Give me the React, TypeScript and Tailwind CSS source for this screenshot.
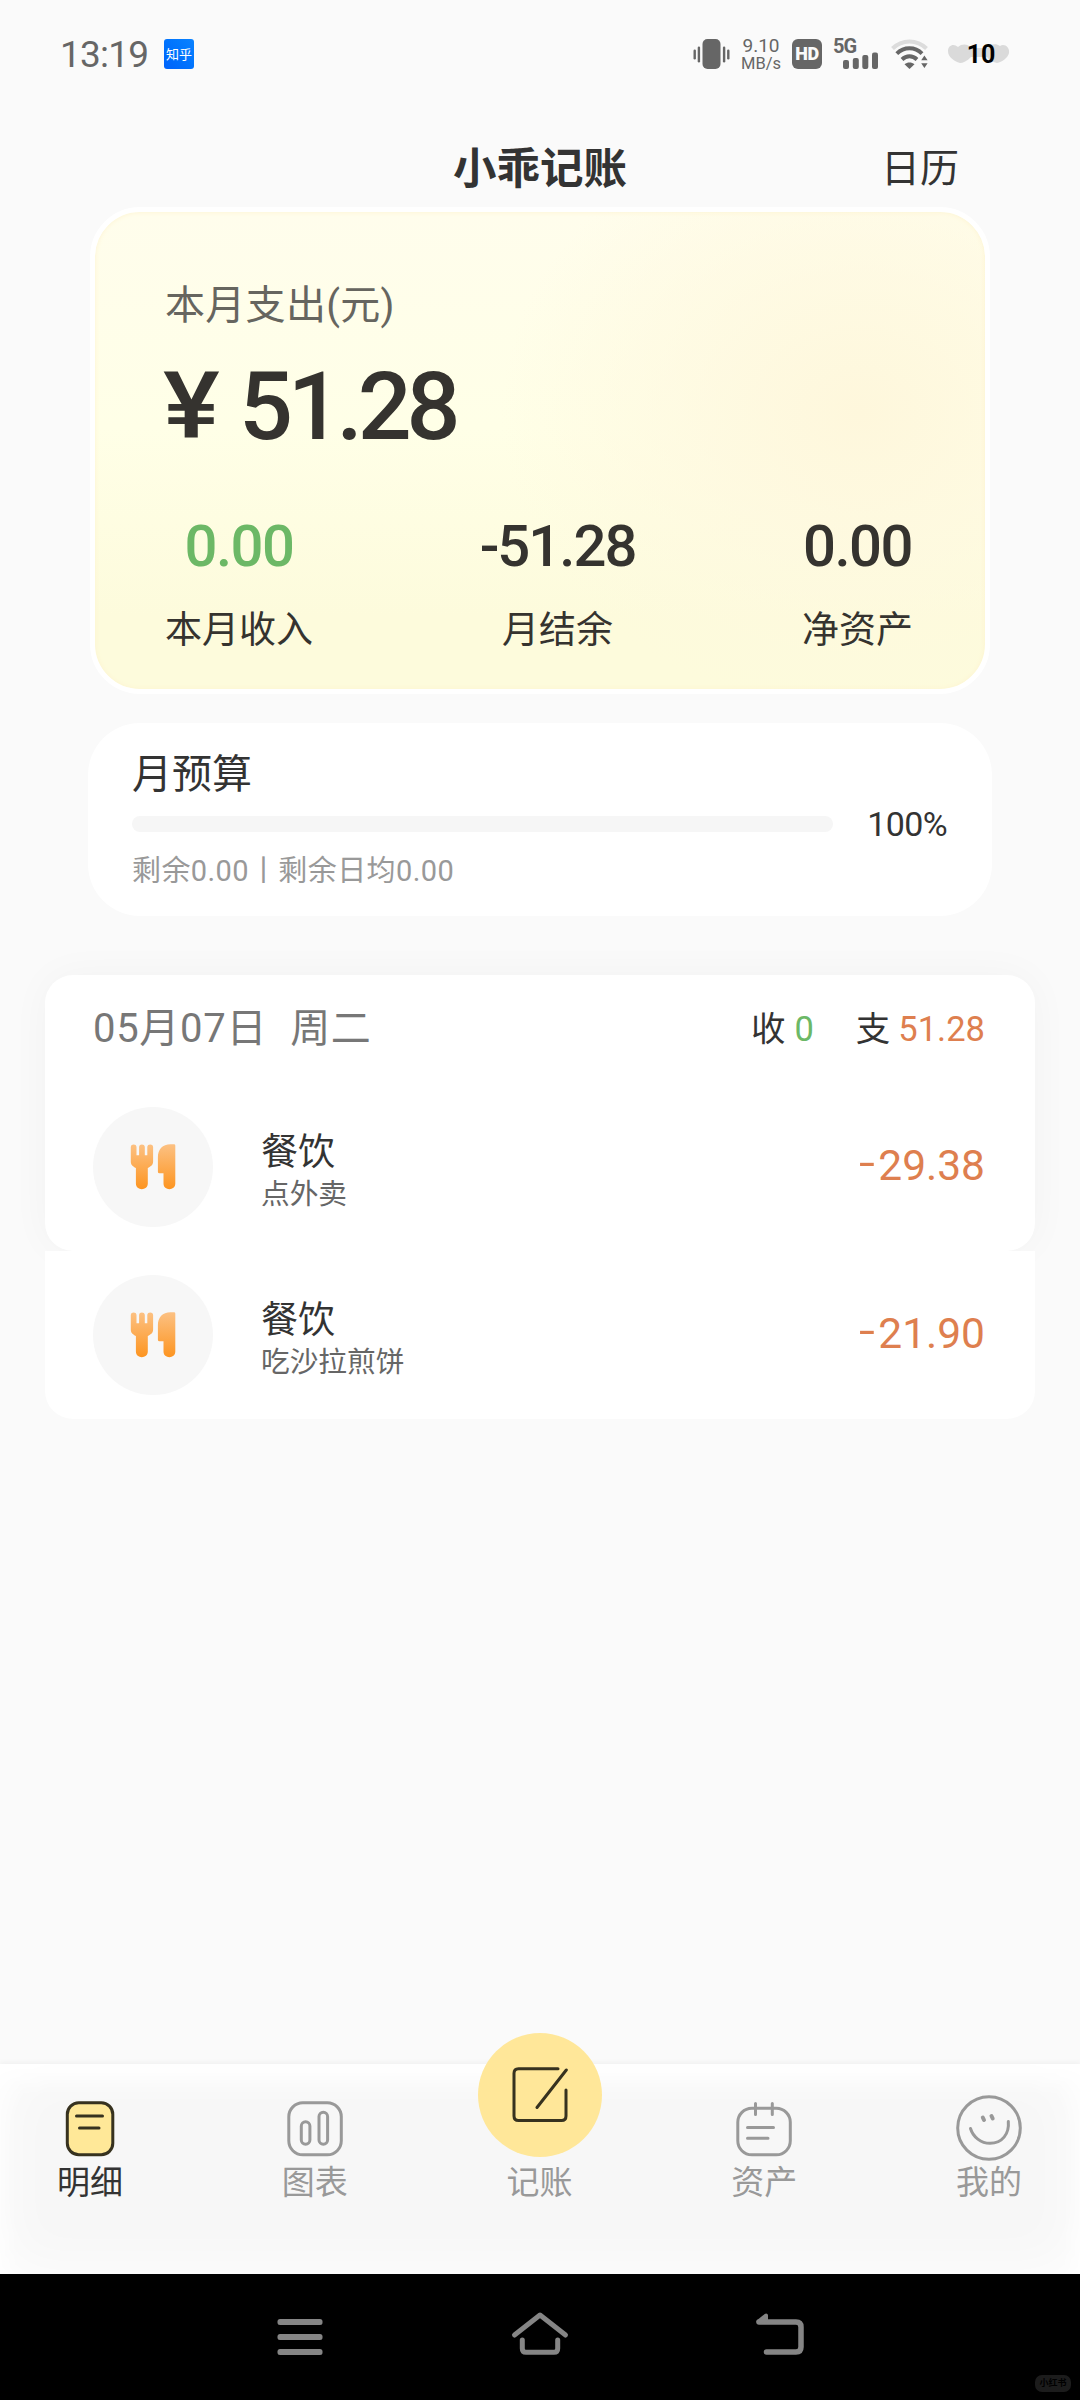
import type { ReactNode } from 'react'

type Entry = {
  id: number
  category: string
  note: string
  amount: string
}

type Stat = {
  label: string
  value: string
  valueClass: string
}

const entries: Entry[] = [
  { id: 1, category: '餐饮', note: '点外卖', amount: '29.38' },
  { id: 2, category: '餐饮', note: '吃沙拉煎饼', amount: '21.90' },
]

const stats: Stat[] = [
  { label: '本月收入', value: '0.00', valueClass: 'tracking-[-1.5px] text-[#6cb866]' },
  { label: '月结余', value: '-51.28', valueClass: 'tracking-[-2px] text-[#35332f]' },
  { label: '净资产', value: '0.00', valueClass: 'tracking-[-1.5px] text-[#35332f]' },
]

function StatusBar() {
  return (
    <div className="flex h-[108px] items-center pl-[60px] pr-[69px] text-[#666]">
      <span className="w-[90px] text-[37px] leading-none tracking-[-0.8px]">13:19</span>
      <span className="ml-[14px] flex size-[30px] items-center justify-center rounded-[3px] bg-gradient-to-bl from-[#0b83ff] to-[#0062fb] text-[13px] leading-none text-white">
        知乎
      </span>

      <svg className="ml-auto" width="37" height="30" viewBox="0 0 37 30" fill="#666">
        <rect x="9.5" y="0" width="18" height="30" rx="5" />
        <rect x="0.5" y="10.5" width="2.4" height="10" rx="1.2" />
        <rect x="4.7" y="7.5" width="2.4" height="16" rx="1.2" />
        <rect x="29.9" y="7.5" width="2.4" height="16" rx="1.2" />
        <rect x="34.1" y="10.5" width="2.4" height="10" rx="1.2" />
      </svg>
      <div className="ml-[12px] flex h-[34px] w-[38px] flex-col items-center justify-between whitespace-nowrap">
        <span className="text-[19px] leading-[17px]">9.10</span>
        <span className="text-[16.5px] leading-[15px]">MB/s</span>
      </div>
      <span className="ml-[12px] flex size-[30px] items-center justify-center rounded-[6px] bg-[#666] text-[18px] font-black leading-none tracking-[-0.5px] text-[#fafafa]">
        HD
      </span>
      <div className="relative ml-[11px] h-[30px] w-[46px]">
        <span className="absolute left-0 top-0 text-[20px] font-bold leading-[15px] tracking-[-1px]">5G</span>
        <svg className="absolute inset-0" width="46" height="30" viewBox="0 0 46 30" fill="#666">
          <rect x="10" y="21" width="6" height="9" rx="2" />
          <rect x="19.8" y="19" width="6" height="11" rx="2" />
          <rect x="29.3" y="16" width="6" height="14" rx="2" />
          <rect x="39" y="13.5" width="6" height="16.5" rx="2" />
        </svg>
      </div>
      <svg className="ml-[12px]" width="38" height="30" viewBox="0 0 38 30" fill="none" strokeWidth="4">
        <path d="M1.5 9.5C11 0 26 0 35.5 9.5" stroke="#dcdcdc" />
        <path d="M5.8 14.6C13 7.5 24 7.5 31 14.6" stroke="#666" />
        <path d="M11 20.5C15.5 16.3 21.5 16.3 26 20.5" stroke="#666" />
        <path d="M13.5 25.2C16.5 23 20.5 23 23.5 25.2L18.5 30Z" fill="#666" stroke="none" />
        <path d="M30.2 21.3L33.4 16.5L36.6 21.3ZM30.2 24.2L33.4 29L36.6 24.2Z" fill="#666" stroke="none" />
      </svg>
      <div className="relative ml-[18px] flex h-[22px] w-[64px] items-center justify-center">
        <svg className="absolute inset-0" width="64" height="22" viewBox="0 0 64 22" fill="#dadada">
          <path d="M11 4C15 0 22 1 24 5L40 5C43 1 49 0 53 3C57 0 63 4 62 10C61 15 55 19 50 20C45 19 42 17 40 14L24 14C20 18 16 20 13 20C7 18 1 14 1 8C1 2 7 0 11 4Z" />
        </svg>
        <span className="relative left-[2px] text-[25px] font-bold leading-none text-black">10</span>
      </div>
    </div>
  )
}

function Header() {
  return (
    <div className="grid h-[99px] grid-cols-3 items-center pr-[121px] pl-[121px] pt-[24px]">
      <h1 className="col-start-2 justify-self-center whitespace-nowrap text-[43.5px] font-bold leading-none text-[#333]">
        小乖记账
      </h1>
      <span className="justify-self-end text-[39px] leading-none text-[#333]">日历</span>
    </div>
  )
}

function SummaryCard() {
  return (
    <section className="mx-[90px] h-[487px] rounded-[50px] border-[5px] border-white bg-[radial-gradient(ellipse_360px_300px_at_86%_42%,#fef7dc_0%,#fef8dfb0_45%,#fffbe400_100%),linear-gradient(180deg,#fffdec_0%,#ffffe7_45%,#fdfbdc_85%)] pl-[70px] pr-[72px] shadow-[inset_0_0_5px_#fdf3cf]">
      <div className="pt-[72px] text-[40px] leading-[44px] tracking-[0.3px] text-[#66655f]">本月支出(元)</div>
      <div className="mt-[30px] flex h-[96px] items-center whitespace-nowrap font-medium leading-none text-[#35332f]">
        <span className="-ml-[2px] w-[76px]">
          <span className="inline-block origin-left scale-x-[1.15] text-[93px]">¥</span>
        </span>
        <span className="text-[95px] tracking-[-5.2px]">51.28</span>
      </div>
      <div className="mt-[52px] flex justify-between">
        {stats.map((stat) => (
          <div key={stat.label} className="flex flex-col items-center">
            <span className={`text-[58px] font-medium leading-[80px] ${stat.valueClass}`}>{stat.value}</span>
            <span className="mt-[17px] text-[37px] leading-[56px] text-[#35332f]">{stat.label}</span>
          </div>
        ))}
      </div>
    </section>
  )
}

function BudgetCard() {
  return (
    <section className="mx-[88px] mt-[29px] h-[193px] rounded-[52px] bg-white pl-[44px] pr-[45px] pt-[30px]">
      <div className="text-[40px] leading-[44px] text-[#333]">月预算</div>
      <div className="mt-[9px] flex h-[36px] items-center justify-between">
        <div className="h-[16px] w-[701px] rounded-full bg-[#f6f6f6]" />
        <span className="text-[34px] leading-none tracking-[-0.6px] text-[#333]">100%</span>
      </div>
      <div className="mt-[13px] whitespace-nowrap text-[29px] leading-[32px] tracking-[0.4px] text-[#999]">
        剩余0.00丨剩余日均0.00
      </div>
    </section>
  )
}

function MealIcon() {
  return (
    <svg width="46" height="46" viewBox="0 0 46 46" fill="url(#meal)">
      <defs>
        <linearGradient id="meal" x1="0" y1="0" x2="0" y2="46" gradientUnits="userSpaceOnUse">
          <stop offset="0" stopColor="#fcc183" />
          <stop offset="1" stopColor="#fd941f" />
        </linearGradient>
      </defs>
      <path d="M0.8 3C0.8 -0.3 6.5 -0.3 6.5 3V11.3H9.1V3C9.1 -0.3 14.8 -0.3 14.8 3V11.3H17.3V3C17.3 -0.3 23.1 -0.3 23.1 3V17.5C23.1 21 21 22.3 17.8 24V39.5C17.8 47 5.9 47 5.9 39.5V24C2.8 22.3 0.8 21 0.8 17.5Z" />
      <path d="M44 0.3Q45.3 0.3 45.3 1.6V39.5C45.3 47 33.5 47 33.5 39.5V29.3H29.5Q27.9 29.3 27.9 27.7V13.5C27.9 5.5 32.5 0.3 40.5 0.3Z" />
    </svg>
  )
}

function Expense({ amount }: { amount: string }) {
  return (
    <span className="relative -top-px ml-auto flex items-center text-[42.5px] leading-none text-[#de7f4f]">
      <span className="relative -top-[3px] mr-[4px] inline-block origin-right scale-x-[1.35]">-</span>
      {amount}
    </span>
  )
}

function EntryRow({ entry }: { entry: Entry }) {
  return (
    <div className="flex h-[168px] items-center">
      <div className="flex size-[120px] items-center justify-center rounded-full bg-[#f7f7f7]">
        <MealIcon />
      </div>
      <div className="ml-[48px] flex flex-col pt-[10px]">
        <span className="text-[37px] leading-[44px] text-[#333]">{entry.category}</span>
        <span className="text-[28.7px] leading-[39px] text-[#666]">{entry.note}</span>
      </div>
      <Expense amount={entry.amount} />
    </div>
  )
}

function DayGroup() {
  return (
    <section className="mx-[45px] mt-[59px]">
      <div className="rounded-[28px] bg-white pl-[48px] pr-[50px] shadow-[0_0_40px_rgba(0,0,0,0.035)]">
        <div className="flex h-[108px] items-center justify-between whitespace-nowrap leading-none">
          <span className="text-[40px] tracking-[0.7px] text-[#777]">
            05月07日<span className="ml-[23px]">周二</span>
          </span>
          <div className="flex items-center text-[34.5px] text-[#333]">
            <span>收</span>
            <span className="ml-[9px] text-[#6cb866]">0</span>
            <span className="ml-[42px]">支</span>
            <span className="ml-[8px] text-[#de7f4f]">51.28</span>
          </div>
        </div>
        <EntryRow entry={entries[0]} />
      </div>
      <div className="relative rounded-b-[28px] bg-white pl-[48px] pr-[50px]">
        <EntryRow entry={entries[1]} />
      </div>
    </section>
  )
}

function Tab({ label, active, children }: { label: string; active?: boolean; children: ReactNode }) {
  return (
    <div className="flex w-[66px] flex-col items-center">
      <div className="flex h-[70px] items-end justify-center">{children}</div>
      <span
        className={`mt-[2px] whitespace-nowrap text-[33px] leading-[40px] ${active ? 'text-[#333]' : 'text-[#999]'}`}
      >
        {label}
      </span>
    </div>
  )
}

function TabBar() {
  return (
    <nav className="flex h-[210px] justify-between bg-[#f7f7f7] pl-[57px] pr-[58px] pt-[27px] shadow-[inset_0_0_60px_#fff,inset_0_14px_24px_#fff,0_-2px_5px_rgba(0,0,0,0.04)]">
      <Tab label="明细" active>
        <svg className="mb-[4px]" width="50" height="56" viewBox="0 0 50 56" fill="none" stroke="#37321f" strokeWidth="3" strokeLinecap="round">
          <rect x="2.3" y="1.8" width="45.5" height="52" rx="11.5" fill="#ffe898" />
          <path d="M11.5 15H37.5M14.5 27H34" />
        </svg>
      </Tab>
      <Tab label="图表">
        <svg className="mb-[4px]" width="56" height="56" viewBox="0 0 56 56" fill="none" stroke="#999" strokeWidth="3">
          <rect x="1.8" y="1.8" width="52.5" height="52" rx="14" />
          <rect x="14.3" y="20.8" width="8.6" height="22.5" rx="4.3" />
          <rect x="32" y="11.3" width="8.6" height="32" rx="4.3" />
        </svg>
      </Tab>
      <Tab label="记账">
        <div className="mb-[4px] flex size-[124px] shrink-0 items-center justify-center rounded-full bg-[#ffe799]">
          <svg width="56" height="56" viewBox="0 0 56 56" fill="none" stroke="#37321f" strokeWidth="3" strokeLinecap="round">
            <path d="M46 1.8H6.5Q2 1.8 2 6.3V49Q2 53.5 6.5 53.5H49.5Q54 53.5 54 49V23" />
            <path d="M54.3 3L25 40.5" />
          </svg>
        </div>
      </Tab>
      <Tab label="资产">
        <svg className="mb-[4px]" width="56" height="56" viewBox="0 0 56 56" fill="none" stroke="#999" strokeWidth="3" strokeLinecap="round">
          <rect x="1.8" y="7.3" width="52.5" height="46.5" rx="14" />
          <path d="M19.5 2.5V13.5M36.3 2.5V13.5" />
          <path d="M11.5 26.5H37.5M11.5 37.3H32" />
        </svg>
      </Tab>
      <Tab label="我的">
        <svg width="66" height="66" viewBox="0 0 66 66" fill="none" stroke="#999" strokeWidth="3" strokeLinecap="round">
          <circle cx="33" cy="33" r="31.3" />
          <path d="M14.5 33.5C17 42 25 48.3 34 48.3C46 48.3 53.5 39 52.3 26.5" />
          <path d="M26.8 22.5L28 25M35.5 21L36.7 23.5" strokeWidth="4" />
        </svg>
      </Tab>
    </nav>
  )
}

function SystemNav() {
  return (
    <div className="relative flex h-[126px] items-start justify-center bg-black pt-[36px]">
      <div className="flex w-[532px] items-start justify-between">
        <svg width="56" height="48" viewBox="0 0 56 48" fill="#858585">
          <rect x="3.5" y="9" width="45" height="6" rx="2.5" />
          <rect x="3.5" y="24" width="45" height="6" rx="2.5" />
          <rect x="3.5" y="39" width="45" height="6" rx="2.5" />
        </svg>
        <svg width="60" height="48" viewBox="0 0 60 48" fill="none" stroke="#858585" strokeWidth="5" strokeLinecap="round" strokeLinejoin="round">
          <path d="M4.5 25L30 5L55.5 25" />
          <path d="M12.3 30V38.5Q12.3 42.3 16 42.3H44Q47.7 42.3 47.7 38.5V30" />
        </svg>
        <svg width="56" height="48" viewBox="0 0 56 48" fill="none" stroke="#858585" strokeWidth="5.5" strokeLinecap="round" strokeLinejoin="round">
          <path d="M16.5 42H46Q51 42 51 37V17Q51 12 46 12H9" />
          <path d="M8.5 11.5L16 5.5V10Z" fill="#858585" strokeWidth="4" />
        </svg>
      </div>
      <span className="absolute bottom-[8px] right-[9px] flex h-[17px] w-[36px] items-center justify-center whitespace-nowrap rounded-[7px] bg-[#1c1c1c] text-[9px] font-bold leading-none text-black">
        小红书
      </span>
    </div>
  )
}

export default function App() {
  return (
    <div className="flex h-[2400px] w-[1080px] flex-col overflow-hidden bg-[#fafafa] font-[Roboto,'Noto_Sans_CJK_SC',sans-serif]">
      <StatusBar />
      <Header />
      <SummaryCard />
      <BudgetCard />
      <DayGroup />
      <div className="mt-auto">
        <TabBar />
        <SystemNav />
      </div>
    </div>
  )
}
